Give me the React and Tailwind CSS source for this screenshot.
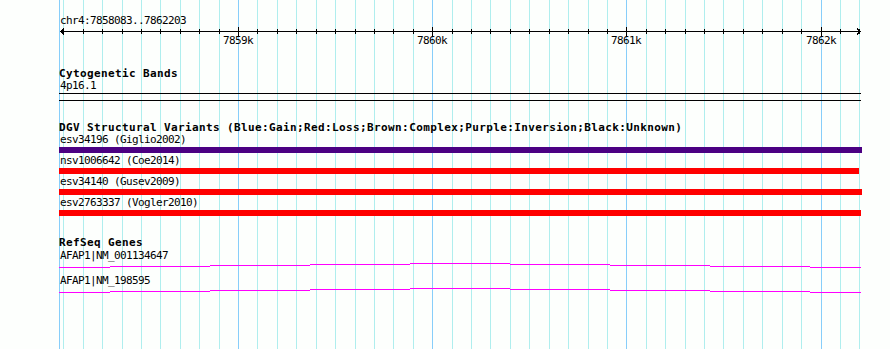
import React from "react"

const START = 7858083
const END = 7862203
const LEFT = 59

function toX(p) {
    return Math.round(60 + (p - START) * 800 / (END - START))
}

const ticks = []
for (let p = 7858100; p <= 7862200; p += 100) {
    ticks.push({ p, x: toX(p), major: p % 1000 === 0 })
}

const variants = [
    { name: "esv34196 (Giglio2002)", color: "bg-[#4b0082]", w: "w-[803px]" },
    { name: "nsv1006642 (Coe2014)", color: "bg-[#ff0000]", w: "w-[800px]" },
    { name: "esv34140 (Gusev2009)", color: "bg-[#ff0000]", w: "w-[803px]" },
    { name: "esv2763337 (Vogler2010)", color: "bg-[#ff0000]", w: "w-[802px]" },
]

// staircase connector: [x from, x to, row]
const geneSteps = [
    [59, 110, 4], [110, 210, 3], [210, 310, 2], [310, 410, 1], [410, 510, 0],
    [510, 610, 1], [610, 710, 2], [710, 810, 3], [810, 861, 4],
]

function Grid() {
    return (
        <svg className="absolute inset-0" width="890" height="349" shapeRendering="crispEdges">
            <rect x={LEFT} y="0" width="1" height="349" fill="#87cefa" />
            {ticks.map((t) => (
                <rect key={t.p} x={t.x} y="0" width="1" height="349" fill={t.major ? "#87cefa" : "#afeeee"} />
            ))}
        </svg>
    )
}

function Ruler() {
    return (
        <div className="relative h-[20px] w-[804px]">
            <svg width="804" height="20" shapeRendering="crispEdges" className="block">
                <rect x="1" y="4" width="801" height="1" fill="#000" />
                {ticks.map((t) => (
                    <rect key={t.p} x={t.x - LEFT} y={t.major ? 0 : 2} width="1" height={t.major ? 10 : 5} fill="#000" />
                ))}
                <polyline points="5,1.5 2,4.5 5,7.5" fill="none" stroke="#000" strokeWidth="1" />
                <polyline points="798,1.5 801,4.5 798,7.5" fill="none" stroke="#000" strokeWidth="1" />
            </svg>
            {ticks.filter((t) => t.major).map((t) => (
                <span key={t.p} className="absolute top-[8px] w-[30px] text-center leading-[12px]" style={{ left: t.x - LEFT - 15 }}>
                    {t.p / 1000}k
                </span>
            ))}
        </div>
    )
}

function GeneLine() {
    return (
        <svg width="803" height="5" shapeRendering="crispEdges" className="block">
            {geneSteps.map(([a, b, r]) => (
                <rect key={a} x={a - LEFT} y={r} width={b - a} height="1" fill="#ff00ff" />
            ))}
        </svg>
    )
}

function Title({ children }) {
    return (
        <div className="mt-[21px] h-[12px] leading-[12px] font-bold text-[11px] tracking-[0.38px] whitespace-nowrap">
            {children}
        </div>
    )
}

export default function App() {
    return (
        <div className="relative w-[890px] h-[349px] overflow-hidden bg-[#fdfffd] text-black font-['DejaVu_Sans_Mono',monospace] text-[11px] tracking-[-0.62px]">
            <Grid />
            <div className="relative flex flex-col pl-[59px]">
                <div className="mt-[15px] h-[12px] leading-[12px] pl-[1px]">chr4:7858083..7862203</div>
                <Ruler />

                <Title>Cytogenetic Bands</Title>
                <div className="h-[12px] leading-[12px] pl-[1px]">4p16.1</div>
                <div className="mt-[1px] w-[802px] h-[8px] border-y border-black" />

                <Title>DGV Structural Variants (Blue:Gain;Red:Loss;Brown:Complex;Purple:Inversion;Black:Unknown)</Title>
                {variants.map((v, i) => (
                    <div key={v.name} className={i === 0 ? "" : "mt-[2px]"}>
                        <div className="h-[12px] leading-[12px] pl-[1px] whitespace-nowrap">{v.name}</div>
                        <div className={`mt-[1px] h-[6px] ${v.w} ${v.color}`} />
                    </div>
                ))}

                <Title>RefSeq Genes</Title>
                <div className="mt-[1px] h-[12px] leading-[12px] pl-[1px]">AFAP1|NM_001134647</div>
                <div className="mt-[1px]">
                    <GeneLine />
                </div>
                <div className="mt-[7px] h-[12px] leading-[12px] pl-[1px]">AFAP1|NM_198595</div>
                <div className="mt-[1px]">
                    <GeneLine />
                </div>
            </div>
        </div>
    )
}
